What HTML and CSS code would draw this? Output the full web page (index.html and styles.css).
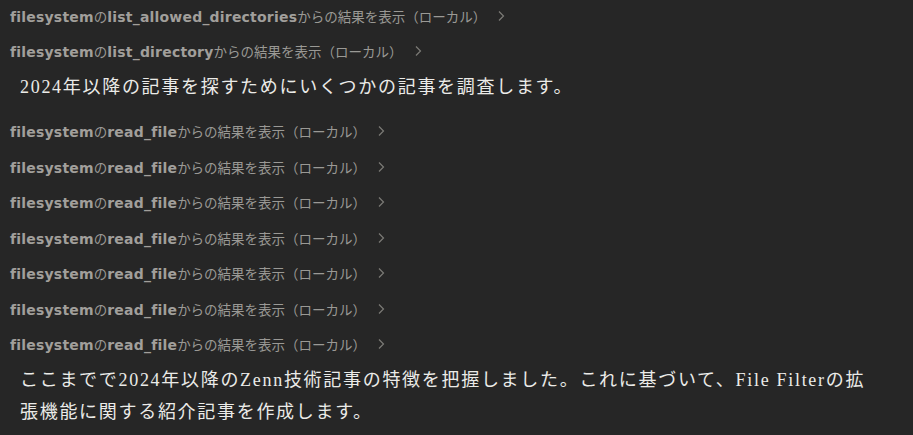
FILE: index.html
```html
<!DOCTYPE html>
<html lang="ja">
<head>
    <meta charset="UTF-8">
    <meta name="viewport" content="width=device-width, initial-scale=1.0">
    <title>Tool results</title>
    <link rel="stylesheet" href="styles.css">
</head>
<body>
    <div class="thread">
        <div class="tool-row">
            <span class="tool-label"><b>filesystem</b>の<b>list_allowed_directories</b>からの結果を表示（ローカル）</span>
            <svg class="chevron" viewBox="0 0 8 12"><polyline points="2,1.5 6.5,6 2,10.5"/></svg>
        </div>
        <div class="tool-row">
            <span class="tool-label"><b>filesystem</b>の<b>list_directory</b>からの結果を表示（ローカル）</span>
            <svg class="chevron" viewBox="0 0 8 12"><polyline points="2,1.5 6.5,6 2,10.5"/></svg>
        </div>

        <p class="message">2024年以降の記事を探すためにいくつかの記事を調査します。</p>

        <div class="tool-row">
            <span class="tool-label"><b>filesystem</b>の<b>read_file</b>からの結果を表示（ローカル）</span>
            <svg class="chevron" viewBox="0 0 8 12"><polyline points="2,1.5 6.5,6 2,10.5"/></svg>
        </div>
        <div class="tool-row">
            <span class="tool-label"><b>filesystem</b>の<b>read_file</b>からの結果を表示（ローカル）</span>
            <svg class="chevron" viewBox="0 0 8 12"><polyline points="2,1.5 6.5,6 2,10.5"/></svg>
        </div>
        <div class="tool-row">
            <span class="tool-label"><b>filesystem</b>の<b>read_file</b>からの結果を表示（ローカル）</span>
            <svg class="chevron" viewBox="0 0 8 12"><polyline points="2,1.5 6.5,6 2,10.5"/></svg>
        </div>
        <div class="tool-row">
            <span class="tool-label"><b>filesystem</b>の<b>read_file</b>からの結果を表示（ローカル）</span>
            <svg class="chevron" viewBox="0 0 8 12"><polyline points="2,1.5 6.5,6 2,10.5"/></svg>
        </div>
        <div class="tool-row">
            <span class="tool-label"><b>filesystem</b>の<b>read_file</b>からの結果を表示（ローカル）</span>
            <svg class="chevron" viewBox="0 0 8 12"><polyline points="2,1.5 6.5,6 2,10.5"/></svg>
        </div>
        <div class="tool-row">
            <span class="tool-label"><b>filesystem</b>の<b>read_file</b>からの結果を表示（ローカル）</span>
            <svg class="chevron" viewBox="0 0 8 12"><polyline points="2,1.5 6.5,6 2,10.5"/></svg>
        </div>
        <div class="tool-row">
            <span class="tool-label"><b>filesystem</b>の<b>read_file</b>からの結果を表示（ローカル）</span>
            <svg class="chevron" viewBox="0 0 8 12"><polyline points="2,1.5 6.5,6 2,10.5"/></svg>
        </div>

        <p class="message">ここまでで2024年以降のZenn技術記事の特徴を把握しました。これに基づいて、File Filterの拡張機能に関する紹介記事を作成します。</p>
    </div>
</body>
</html>
```

FILE: styles.css
```css
body {
    margin: 0;
    padding: 0;
    background-color: #262626;
    font-family: "Noto Sans CJK JP", sans-serif;
}
.thread {
    padding: 0 10px;
}
.tool-row {
    display: flex;
    align-items: center;
    gap: 11px;
    height: 31px;
    margin-bottom: 4.5px;
    font-size: 13.5px;
    color: #9a9995;
    white-space: nowrap;
}
.tool-label b {
    font-family: "DejaVu Sans", sans-serif;
    font-size: 14px;
    font-weight: bold;
    letter-spacing: 0.2px;
    color: #a19f9b;
}
.chevron {
    width: 8px;
    height: 12px;
    fill: none;
    stroke: #7c7b77;
    stroke-width: 1.2;
}
.message {
    margin: 1px 0 12.5px;
    padding: 0 32px 0 10px;
    font-family: "Liberation Serif", "Noto Sans CJK JP", serif;
    font-size: 18px;
    line-height: 32px;
    letter-spacing: 1.7px;
    color: #ebebe8;
}
```
